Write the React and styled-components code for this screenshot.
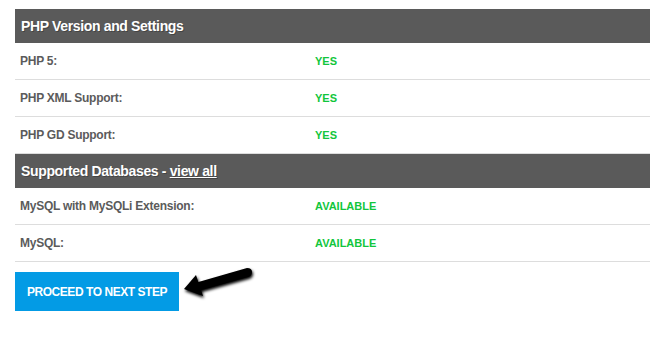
import React from "react";
import styled, { createGlobalStyle } from "styled-components";

const Global = createGlobalStyle`
  html, body { margin: 0; padding: 0; background: #fff; }
  body { font-family: "Liberation Sans", Arial, sans-serif; }
`;

const Page = styled.div`
  padding: 9px 0 0 15px;
`;

const Table = styled.div`
  width: 635px;
`;

const Header = styled.div`
  height: 34px;
  background: #5a5a5a;
  color: #fff;
  font-weight: bold;
  font-size: 14px;
  letter-spacing: -0.35px;
  display: flex;
  align-items: center;
  padding-left: 6px;
  text-shadow: 1px 1px 0 rgba(0, 0, 0, 0.25);
  a { color: #fff; text-decoration: underline; }
`;

const Row = styled.div`
  height: 36px;
  border-bottom: 1px solid #dddddd;
  display: grid;
  grid-template-columns: 300px 1fr;
  align-items: center;
`;

const Label = styled.div`
  padding-left: 5px;
  color: #5b5b5b;
  font-weight: bold;
  font-size: 12px;
  letter-spacing: -0.25px;
`;

const Value = styled.div`
  color: #12c63c;
  font-weight: bold;
  font-size: 11px;
`;

const Actions = styled.div`
  display: flex;
  align-items: flex-start;
  margin-top: 10px;
`;

const Button = styled.button`
  width: 164px;
  height: 39px;
  border: none;
  background: #039be5;
  color: #fff;
  font-family: "Liberation Sans", Arial, sans-serif;
  font-weight: bold;
  font-size: 12px;
  letter-spacing: -0.45px;
  text-transform: uppercase;
  padding: 0;
  cursor: pointer;
`;

const Arrow = styled.svg`
  margin-left: 2px;
  margin-top: -8px;
  overflow: visible;
`;

const php = [
  ["PHP 5:", "YES"],
  ["PHP XML Support:", "YES"],
  ["PHP GD Support:", "YES"],
];
const dbs = [
  ["MySQL with MySQLi Extension:", "AVAILABLE"],
  ["MySQL:", "AVAILABLE"],
];

export default function App() {
  return (
    <>
      <Global />
      <Page>
        <Table>
          <Header>PHP Version and Settings</Header>
          {php.map(([l, v]) => (
            <Row key={l}>
              <Label>{l}</Label>
              <Value>{v}</Value>
            </Row>
          ))}
          <Header>
            Supported Databases -&nbsp;<a href="#">view all</a>
          </Header>
          {dbs.map(([l, v]) => (
            <Row key={l}>
              <Label>{l}</Label>
              <Value>{v}</Value>
            </Row>
          ))}
        </Table>
        <Actions>
          <Button>Proceed to next step</Button>
          <Arrow width="74" height="36" viewBox="0 0 74 36">
            <defs>
              <filter id="sh" x="-20%" y="-40%" width="140%" height="180%">
                <feGaussianBlur in="SourceAlpha" stdDeviation="1.5" />
                <feOffset dx="1" dy="2" result="b" />
                <feMerge>
                  <feMergeNode in="b" />
                  <feMergeNode in="SourceGraphic" />
                </feMerge>
              </filter>
            </defs>
            <g filter="url(#sh)" fill="#000">
              <path d="M14 19 L66 4 Q71 4 71 8 Q71 12 67 13 L17 27 Z" />
              <path d="M3 25 L15 11 L18 20 L22 32 Z" />
            </g>
          </Arrow>
        </Actions>
      </Page>
    </>
  );
}
